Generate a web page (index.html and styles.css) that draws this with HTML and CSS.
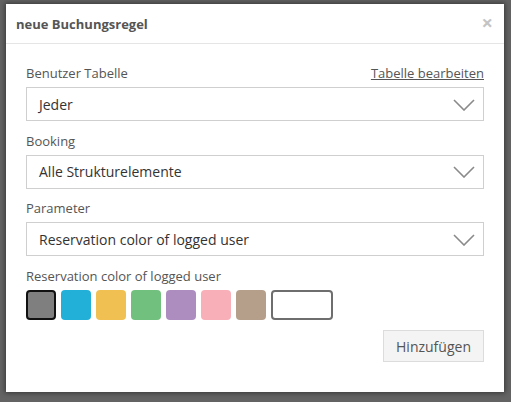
FILE: index.html
```html
<!DOCTYPE html>
<html>
<head>
<meta charset="utf-8">
<link rel="stylesheet" href="styles.css">
</head>
<body>
<div class="dialog">
  <div class="header">
    <span class="title">neue Buchungsregel</span>
    <span class="close">×</span>
  </div>
  <div class="content">
    <div class="group">
      <div class="label-row">
        <span class="label">Benutzer Tabelle</span>
        <a class="link">Tabelle bearbeiten</a>
      </div>
      <div class="select">
        <span>Jeder</span>
        <svg class="chev" width="22" height="12" viewBox="0 0 22 12"><path d="M1 1 L11 11 L21 1" fill="none" stroke="#8a8a8a" stroke-width="1.6"/></svg>
      </div>
    </div>
    <div class="group">
      <div class="label-row"><span class="label">Booking</span></div>
      <div class="select">
        <span>Alle Strukturelemente</span>
        <svg class="chev" width="22" height="12" viewBox="0 0 22 12"><path d="M1 1 L11 11 L21 1" fill="none" stroke="#8a8a8a" stroke-width="1.6"/></svg>
      </div>
    </div>
    <div class="group">
      <div class="label-row"><span class="label">Parameter</span></div>
      <div class="select">
        <span>Reservation color of logged user</span>
        <svg class="chev" width="22" height="12" viewBox="0 0 22 12"><path d="M1 1 L11 11 L21 1" fill="none" stroke="#8a8a8a" stroke-width="1.6"/></svg>
      </div>
    </div>
    <div class="group">
      <div class="label-row"><span class="label">Reservation color of logged user</span></div>
      <div class="swatches">
        <span class="sw sw-gray selected"></span>
        <span class="sw sw-blue"></span>
        <span class="sw sw-yellow"></span>
        <span class="sw sw-green"></span>
        <span class="sw sw-purple"></span>
        <span class="sw sw-pink"></span>
        <span class="sw sw-tan"></span>
        <span class="sw sw-none"></span>
      </div>
    </div>
    <div class="actions">
      <button class="btn">Hinzufügen</button>
    </div>
  </div>
</div>
</body>
</html>
```
FILE: styles.css
```css
html, body {
  margin: 0;
  padding: 0;
}
body {
  background: #636363;
  width: 511px;
  height: 402px;
  padding: 4px 0 0 6px;
  box-sizing: border-box;
  font-family: "Open Sans", "Noto Sans", sans-serif;
  overflow: hidden;
}
.dialog {
  width: 498px;
  height: 388px;
  background: #fff;
  box-shadow: 0 0 5px 1px rgba(0, 0, 0, 0.45);
  box-sizing: border-box;
}
.header {
  height: 40px;
  border-bottom: 1px solid #e5e5e5;
  display: flex;
  align-items: center;
  justify-content: space-between;
  padding: 0 11px 0 10px;
  box-sizing: border-box;
}
.title {
  font-size: 13px;
  font-weight: 700;
  color: #555;
}
.close {
  font-size: 20px;
  font-weight: 700;
  color: #c4c4c4;
  line-height: 1;
  margin-top: -1px;
}
.content {
  padding: 20px 20px 0 20px;
}
.group {
  margin-bottom: 10.5px;
}
.label-row {
  display: flex;
  justify-content: space-between;
  align-items: center;
  height: 18px;
  margin-bottom: 5px;
}
.label {
  font-size: 13px;
  color: #555;
}
.link {
  font-size: 13px;
  color: #555;
  text-decoration: underline;
}
.select {
  height: 34px;
  border: 1px solid #cfcfcf;
  box-sizing: border-box;
  display: flex;
  align-items: center;
  justify-content: space-between;
  padding: 0 8px 0 12px;
  font-size: 14px;
  color: #333;
}
.chev {
  display: block;
  margin-top: 1px;
}
.swatches {
  display: flex;
  gap: 5px;
}
.sw {
  width: 30px;
  height: 30px;
  border-radius: 4px;
  box-sizing: border-box;
  display: block;
}
.sw-gray { background: #7f7f7f; }
.sw-blue { background: #22b0d9; }
.sw-yellow { background: #f0c152; }
.sw-green { background: #72c07e; }
.sw-purple { background: #ad8dc0; }
.sw-pink { background: #f8afb8; }
.sw-tan { background: #b59f8a; }
.sw-none {
  width: 62px;
  background: #fff;
  border: 2px solid #6e6e6e;
}
.selected {
  border: 2px solid #111;
}
.actions {
  display: flex;
  justify-content: flex-end;
}
.btn {
  height: 32px;
  width: 101px;
  background: #f4f4f4;
  border: 1px solid #dcdcdc;
  font-family: "Open Sans", "Noto Sans", sans-serif;
  font-size: 14px;
  color: #555;
  padding: 0;
  cursor: pointer;
}
```
